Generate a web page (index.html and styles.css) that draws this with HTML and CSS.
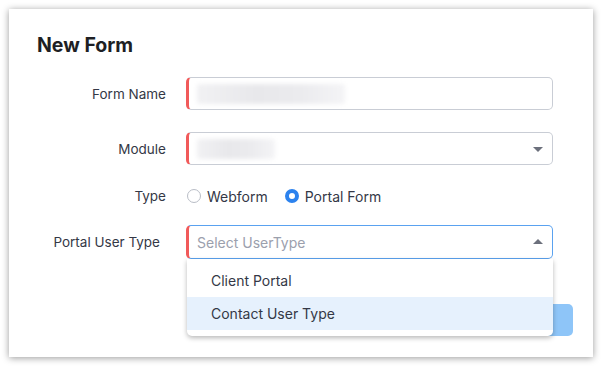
FILE: index.html
```html
<!DOCTYPE html>
<html>
<head>
<meta charset="utf-8">
<link rel="stylesheet" href="styles.css">
</head>
<body>
<div class="card">
  <h1 class="title">New Form</h1>
  <div class="form">
    <div class="row">
      <label class="label">Form Name</label>
      <div class="field req"><span class="redact redact-long"></span></div>
    </div>
    <div class="row">
      <label class="label">Module</label>
      <div class="field req"><span class="redact redact-short"></span><span class="caret down"></span></div>
    </div>
    <div class="row row-type">
      <label class="label">Type</label>
      <div class="radios">
        <span class="radio"><span class="dot"></span>Webform</span>
        <span class="radio"><span class="dot on"></span>Portal Form</span>
      </div>
    </div>
    <div class="row">
      <label class="label label-pad">Portal User Type</label>
      <div class="select-wrap">
        <div class="field req focus"><span class="placeholder">Select UserType</span><span class="caret up"></span></div>
        <div class="menu">
          <div class="item">Client Portal</div>
          <div class="item active">Contact User Type</div>
        </div>
      </div>
    </div>
  </div>
  <div class="footer">
    <button class="btn">Next</button>
  </div>
</div>
</body>
</html>
```
FILE: styles.css
```css
* { box-sizing: border-box; }
html, body { margin: 0; padding: 0; background: #ffffff; }
body {
  padding: 9px;
  font-family: "Inter", "Noto Sans", sans-serif;
  color: #333744;
}
.card {
  width: 584px;
  height: 348px;
  background: #fff;
  box-shadow: 0 1px 7px rgba(0,0,0,0.4);
  padding: 24px 40px 0 28px;
}
.title {
  margin: 0;
  font-size: 19.5px;
  line-height: 24px;
  font-weight: 700;
  color: #1e1f24;
}
.form {
  margin-top: 20px;
  display: flex;
  flex-direction: column;
}
.row {
  display: grid;
  grid-template-columns: 129px 367px;
  column-gap: 20px;
  align-items: center;
  margin-bottom: 22px;
}
.row-type { margin-bottom: 19px; margin-top: -1px; }
.label {
  text-align: right;
  font-size: 13.5px;
  color: #343846;
}
.label-pad { padding-right: 6px; }
.field {
  position: relative;
  height: 33px;
  border: 1px solid #c9cdd5;
  border-radius: 5px;
  background: #fff;
  display: flex;
  align-items: center;
  padding-left: 8px;
}
.field.req { border-left: 3px solid #f15a5a; }
.field.focus { border-color: #5aa2f0; border-left-color: #f15a5a; height: 34px; }
.redact {
  display: block;
  height: 20px;
  border-radius: 3px;
  background: linear-gradient(90deg, #f1f1f3, #e8e8eb 40%, #ebebee 70%, #f4f4f6);
  filter: blur(2px);
}
.redact-long { width: 148px; }
.redact-short { width: 78px; }
.placeholder { font-size: 14px; color: #9ba0ad; }
.caret {
  position: absolute;
  right: 9px;
  top: 50%;
  width: 0; height: 0;
  border-left: 5px solid transparent;
  border-right: 5px solid transparent;
}
.caret.down { border-top: 5px solid #6c707c; margin-top: -2px; }
.caret.up { border-bottom: 5px solid #6c707c; margin-top: -3px; }
.radios { display: flex; align-items: center; height: 20px; font-size: 14px; color: #343846; }
.radio { display: flex; align-items: center; margin-right: 16px; }
.dot {
  width: 14px; height: 14px;
  border-radius: 50%;
  border: 1.5px solid #b9bdc6;
  margin-right: 6px;
  margin-left: 1px;
}
.dot.on { border: 4px solid #2c82ee; background: #fff; }
.select-wrap { position: relative; }
.menu {
  position: absolute;
  left: 1px; right: 0;
  top: 34px;
  z-index: 2;
  background: #fff;
  border-radius: 0 0 5px 5px;
  box-shadow: 0 2px 5px rgba(0,0,0,0.28);
  padding: 5px 0 6px;
}
.item {
  height: 33px;
  line-height: 33px;
  padding-left: 24px;
  font-size: 14px;
  color: #343846;
}
.item.active { background: #e6f1fd; }
.footer {
  display: flex;
  justify-content: flex-end;
  margin-top: 23px;
  margin-right: -20px;
}
.btn {
  height: 32px;
  width: 86px;
  border: none;
  border-radius: 5px;
  background: #8ec5f8;
  color: #fff;
  font-family: inherit;
  font-size: 14px;
}
```
